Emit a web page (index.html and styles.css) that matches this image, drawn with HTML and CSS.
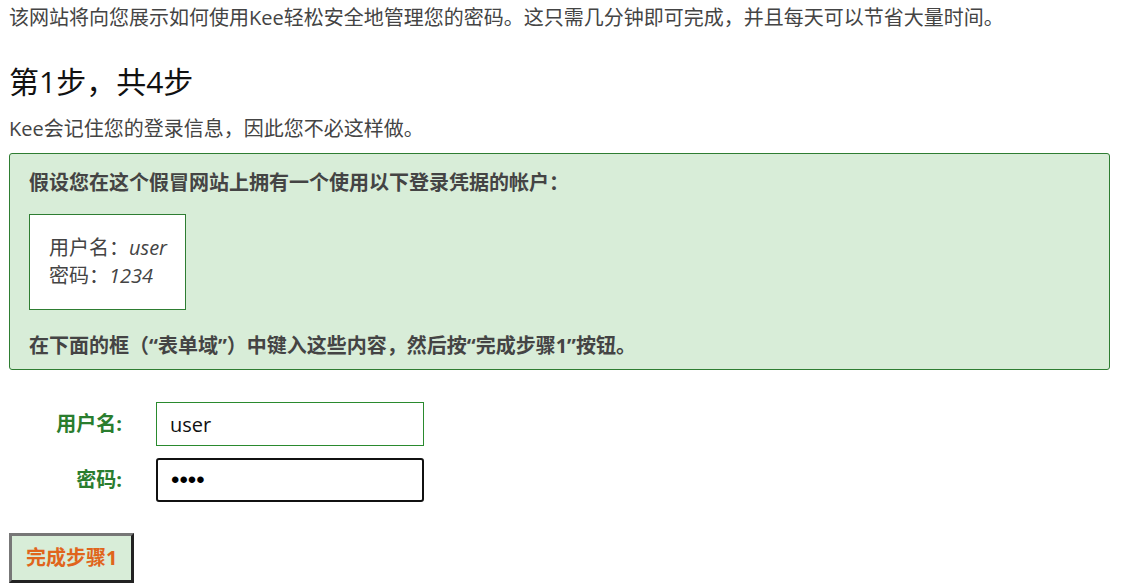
FILE: index.html
```
<!DOCTYPE html>
<html lang="zh-CN">
<head>
    <meta charset="UTF-8">
    <meta name="viewport" content="width=device-width, initial-scale=1.0">
    <title>Kee 教程 - 第1步</title>
    <link rel="stylesheet" href="styles.css">
</head>
<body>

    <p class="intro">该网站将向您展示如何使用Kee轻松安全地管理您的密码。这只需几分钟即可完成，并且每天可以节省大量时间。</p>

    <h1>第1步，共4步</h1>
    <p class="lead">Kee会记住您的登录信息，因此您不必这样做。</p>

    <div class="step-box">
        <p class="step-text">假设您在这个假冒网站上拥有一个使用以下登录凭据的帐户：</p>
        <div class="creds">
            用户名：<em>user</em><br>
            密码：<em>1234</em>
        </div>
        <p class="step-text step-last">在下面的框（“表单域”）中键入这些内容，然后按“完成步骤1”按钮。</p>
    </div>

    <form class="login" onsubmit="return false">
        <label for="username">用户名:</label>
        <input id="username" class="field" type="text" value="user">
        <label for="password">密码:</label>
        <input id="password" class="field field-focus" type="password" value="1234">
    </form>

    <button class="next-btn">完成步骤1</button>

</body>
</html>
```

FILE: styles.css
```
body {
    font-family: "Open Sans", "Noto Sans CJK SC", sans-serif;
    font-size: 20px;
    line-height: 28px;
    color: #444;
    margin: 4px 14px 4px 9px;
}

p {
    margin: 0;
}

h1 {
    font-size: 30px;
    line-height: 36px;
    font-weight: normal;
    color: #111;
    margin: 32px 0 15px;
}

.step-box {
    background-color: #d8edd8;
    border: 1px solid #2e7d32;
    border-radius: 3px;
    padding: 15px 19px 9px;
    margin-top: 10px;
}

.step-text {
    font-weight: bold;
}

.creds {
    display: inline-block;
    background-color: #fff;
    border: 1px solid #2e7d32;
    padding: 19px 18px 19px 19px;
    margin: 17px 0 22px;
}

.login {
    display: grid;
    grid-template-columns: 113px 268px;
    column-gap: 34px;
    row-gap: 12px;
    align-items: center;
    margin-top: 32px;
}

.login label {
    text-align: right;
    font-weight: bold;
    color: #2a7d2e;
}

.field {
    font-family: "Open Sans", "Noto Sans CJK SC", sans-serif;
    font-size: 20px;
    color: #111;
    height: 44px;
    box-sizing: border-box;
    padding: 0 13px;
    border: 1px solid #2a8a2e;
    background: #fff;
    outline: none;
}

.field-focus {
    font-family: "Liberation Sans", sans-serif;
    font-size: 24px;
    color: #000;
    border: 2px solid #111;
    border-radius: 3px;
    padding: 0 13px;
}

.next-btn {
    font-family: "Open Sans", "Noto Sans CJK SC", sans-serif;
    font-size: 20px;
    line-height: 28px;
    font-weight: bold;
    color: #e0651c;
    background-color: #d8edd8;
    border: 3px solid;
    border-color: #777 #222 #222 #777;
    padding: 8px 14px;
    margin-top: 31px;
    cursor: pointer;
}
```
